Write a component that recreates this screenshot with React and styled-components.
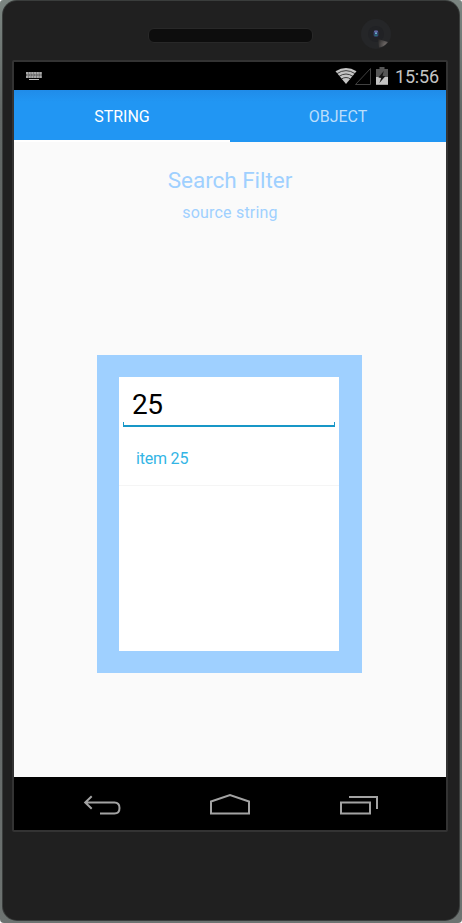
import React from "react";
import styled, { createGlobalStyle } from "styled-components";

const GlobalStyle = createGlobalStyle`
  * { box-sizing: border-box; }
  body { margin: 0; background: #fff; overflow: hidden; font-family: Roboto, sans-serif; }
`;

const Chassis = styled.main`
  width: 462px;
  height: 923px;
  padding: 1px 3px 3px;
  background: linear-gradient(#7b8581, #626866 12%, #5c6060 55%, #6d7371);
  border-radius: 3px 3px 4px 4px;
`;

const Face = styled.div`
  width: 456px;
  height: 919px;
  background: #202020;
  border-radius: 14px;
  box-shadow: 0 0 0 1px #3a3d3c;
`;

const Earpiece = styled.header`
  display: flex;
  align-items: flex-start;
  height: 59px;
  padding-left: 145px;
`;

const Speaker = styled.div`
  width: 165px;
  height: 15px;
  margin-top: 27px;
  background: #0d0d0d;
  border: 1px solid #282828;
  border-radius: 6px;
`;

const CameraIcon = styled.svg`
  width: 30px;
  height: 30px;
  margin: 18px 0 0 48px;
`;

const Screen = styled.section`
  width: 436px;
  height: 772px;
  margin-left: 9px;
  border: 2px solid #333;
  border-radius: 2px;
  display: flex;
  flex-direction: column;
`;

const StatusBar = styled.div`
  display: flex;
  align-items: center;
  height: 28px;
  background: #000;
  padding: 0 7px 0 12px;
`;

const KeyboardIcon = styled.svg`
  width: 16px;
  height: 9px;
  margin-right: auto;
`;

const SignalIcons = styled.svg`
  width: 54px;
  height: 20px;
  margin: -1px 6px 0 0;
`;

const Clock = styled.time`
  font-size: 18px;
  letter-spacing: -0.2px;
  line-height: 28px;
  padding-top: 2px;
  width: 44px;
  color: #c4c4c4;
  white-space: nowrap;
`;

const Tabs = styled.nav`
  display: grid;
  grid-template-columns: 1fr 1fr;
  height: 52px;
  background: linear-gradient(#208ce9, #2196f3 12px);
`;

const Tab = styled.button`
  appearance: none;
  border: 0;
  padding: 2px 0 0;
  background: none;
  font: 400 16px/50px Roboto, sans-serif;
  letter-spacing: -0.05px;
  color: ${(p) => (p.$active ? "#fff" : "#bbdefb")};
  box-shadow: ${(p) => (p.$active ? "inset 0 -2px #fff" : "none")};
`;

const Content = styled.div`
  flex: 1;
  display: flex;
  flex-direction: column;
  align-items: center;
  background: #fafafa;
`;

const Title = styled.h1`
  margin: 23px 0 0;
  font-size: 22.5px;
  font-weight: 400;
  letter-spacing: -0.04px;
  line-height: 30px;
  color: #9fd0ff;
`;

const Subtitle = styled.p`
  margin: 8px 0 0;
  font-size: 16px;
  letter-spacing: 0.2px;
  line-height: 20px;
  color: #9fd0ff;
`;

const FilterPanel = styled.div`
  width: 265px;
  height: 318px;
  margin-top: 132px;
  margin-right: 1px;
  padding: 22px 23px 22px 22px;
  background: #9fd0ff;
`;

const FilterList = styled.div`
  height: 274px;
  background: #fff;
`;

const Field = styled.div`
  display: flex;
  flex-direction: column;
  height: 54px;
  padding: 6px 4px 0;
`;

const FilterInput = styled.input`
  width: 100%;
  height: 40px;
  padding: 3px 9px 0;
  border: 0;
  outline: 0;
  background: transparent;
  font: 400 28px/36px Roboto, sans-serif;
  letter-spacing: -0.5px;
  color: #000;
`;

const FieldLine = styled.div`
  height: 5px;
  margin: -1px 0 0;
  border: solid #1897c7;
  border-width: 0 1px 2px;
`;

const ListItem = styled.div`
  height: 55px;
  padding-left: 17px;
  border-bottom: 1px solid #f5f5f5;
  font-size: 16px;
  letter-spacing: -0.2px;
  line-height: 55px;
  color: #33b5e5;
`;

const NavBar = styled.footer`
  display: flex;
  height: 53px;
  padding: 15px 67px 0 69px;
  justify-content: space-between;
  background: #000;
`;

const NavButton = styled.button`
  display: block;
  width: ${(p) => p.$width}px;
  height: 24px;
  padding: 0;
  border: 0;
  background: none;
`;

const NavIcon = styled.svg`
  display: block;
  width: 100%;
  height: 24px;
  fill: none;
  stroke: #a3a3a3;
  stroke-width: 2;
`;

function Camera() {
  return (
    <CameraIcon viewBox="0 0 30 30">
      <defs>
        <radialGradient id="glint" cx="25" cy="26" r="9" gradientUnits="userSpaceOnUse">
          <stop offset="0" stopColor="#77716f" />
          <stop offset="1" stopColor="#292828" />
        </radialGradient>
      </defs>
      <circle cx="15" cy="15" r="15" fill="#252628" />
      <circle cx="15" cy="15" r="8" fill="#212225" />
      <path d="M17 20 27 23Q23 28 18 28.5Z" fill="url(#glint)" />
      <rect x="12.5" y="11.5" width="5" height="6.5" rx="2" fill="#343b65" />
      <rect x="13" y="11.5" width="4" height="2" rx="1" fill="#6267a0" />
      <rect x="14" y="13.5" width="2" height="1.5" fill="#6aa9cb" />
      <rect x="13.5" y="15.5" width="3" height="1.5" fill="#257174" />
    </CameraIcon>
  );
}

function Keyboard() {
  return (
    <KeyboardIcon viewBox="0 0 16 9">
      <path d="M0 0h16v6H0z" fill="#686868" />
      <path d="M0 1h16M0 5h16" stroke="#bdbdbd" strokeWidth="1.4" strokeDasharray="2 .7" />
      <path d="M1 3h14" stroke="#aaa" strokeWidth="1.2" strokeDasharray="1.3 1.3" />
      <path d="M3 7.5h10" stroke="#bdbdbd" />
    </KeyboardIcon>
  );
}

function StatusIcons() {
  return (
    <SignalIcons viewBox="0 0 54 20">
      <path d="M.5 5.2Q11 -1 21.5 5.2L11 18Z" fill="#c4c4c4" />
      <path d="M1.8 7.7Q11 1.6 20.2 7.7M4 10.4Q11 5.6 18 10.4M6.3 13.1Q11 9.9 15.7 13.1" fill="none" stroke="#111" strokeWidth=".75" />
      <path d="M35.5 2.5v16h-15Z" fill="none" stroke="#414141" />
      <path d="M44.5 1h5v2H53v15.7H41V3h3.5Z" fill="#565656" />
      <path d="M41 11h12v7.7H41Z" fill="#c4c4c4" />
      <path d="M48.8 5 43.4 11.6 46.2 12 44.4 17 50.3 10.2 47.5 9.7Z" fill="#151515" />
    </SignalIcons>
  );
}

export default function App() {
  return (
    <>
      <GlobalStyle />
      <Chassis>
        <Face>
          <Earpiece>
            <Speaker />
            <Camera />
          </Earpiece>
          <Screen>
            <StatusBar>
              <Keyboard />
              <StatusIcons />
              <Clock>15:56</Clock>
            </StatusBar>
            <Tabs>
              <Tab $active>STRING</Tab>
              <Tab>OBJECT</Tab>
            </Tabs>
            <Content>
              <Title>Search Filter</Title>
              <Subtitle>source string</Subtitle>
              <FilterPanel>
                <FilterList>
                  <Field>
                    <FilterInput defaultValue="25" aria-label="Filter" />
                    <FieldLine />
                  </Field>
                  <ListItem>item 25</ListItem>
                </FilterList>
              </FilterPanel>
            </Content>
            <NavBar>
              <NavButton $width={38} aria-label="Back">
                <NavIcon viewBox="0 0 38 24">
                  <path d="M2 10.5H31.5Q36.5 10.5 36.5 16Q36.5 21.5 31.5 21.5H17M8.7 4.2 2.2 10.5 8.7 16.8" />
                </NavIcon>
              </NavButton>
              <NavButton $width={42} aria-label="Home">
                <NavIcon viewBox="0 0 42 24">
                  <path d="M2 9.5 21 3 40 9.5V21.5H2Z" />
                </NavIcon>
              </NavButton>
              <NavButton $width={40} aria-label="Recent apps">
                <NavIcon viewBox="0 0 40 24">
                  <path d="M2 10.5H31V21.5H2ZM10 5H38V17" />
                </NavIcon>
              </NavButton>
            </NavBar>
          </Screen>
        </Face>
      </Chassis>
    </>
  );
}
